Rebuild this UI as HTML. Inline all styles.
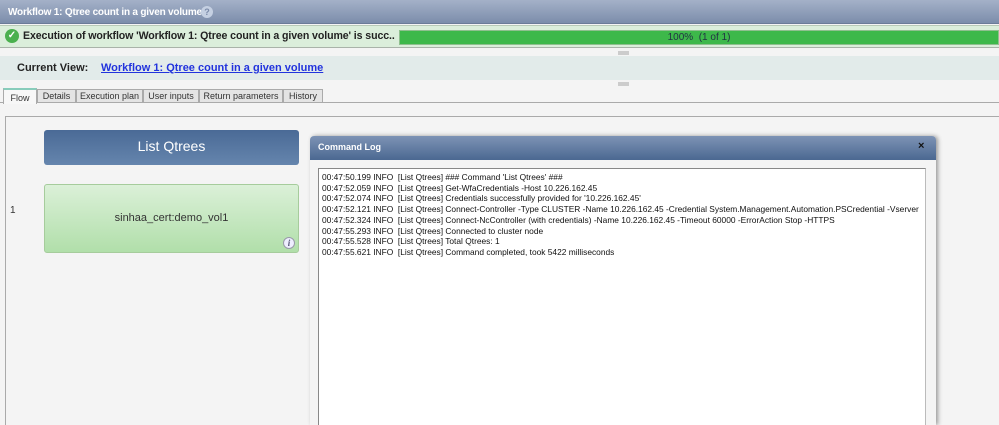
<!DOCTYPE html>
<html><head><style>
*{margin:0;padding:0;box-sizing:border-box}
body{width:999px;height:425px;overflow:hidden;background:#f4f4f4;font-family:"Liberation Sans",sans-serif;position:relative}
.abs{position:absolute}
</style></head><body>
<div class="abs" style="left:0;top:0;width:999px;height:24px;background:linear-gradient(#a4b1c8,#7c8dab);border-bottom:1px solid #6b7b98"></div>
<div class="abs" style="left:8px;top:7px;font-size:10px;font-weight:bold;color:#fff;letter-spacing:-0.2px">Workflow 1: Qtree count in a given volume</div>
<div class="abs" style="left:201px;top:6px;width:12px;height:12px;border-radius:50%;background:#c5d0e2;color:#7a8aa8;font-size:9px;font-weight:bold;text-align:center;line-height:12px">?</div>
<div class="abs" style="left:0;top:25px;width:999px;height:23px;background:#dbeedb;border-top:1px solid #b7c9b7;border-bottom:1px solid #a9b3a9"></div>
<div class="abs" style="left:5px;top:29px;width:14px;height:14px;border-radius:50%;background:#4ab04e;color:#fff;font-size:10px;text-align:center;line-height:14px;font-weight:bold">✓</div>
<div class="abs" style="left:23px;top:30px;font-size:10.6px;font-weight:bold;color:#222;white-space:nowrap;width:372px;overflow:hidden;letter-spacing:-0.1px">Execution of workflow 'Workflow 1: Qtree count in a given volume' is succ...</div>
<div class="abs" style="left:399px;top:30px;width:600px;height:15px;background:#3db84a;border:1px solid #8fbf8f;font-size:10px;color:#234;text-align:center;line-height:13px">100%&nbsp;&nbsp;(1 of 1)</div>
<div class="abs" style="left:618px;top:51px;width:11px;height:4px;background:#ccc"></div>
<div class="abs" style="left:0;top:56px;width:999px;height:24px;background:#e2ebea"></div>
<div class="abs" style="left:17px;top:62px;font-size:11px;font-weight:bold;color:#222">Current View:</div>
<div class="abs" style="left:101px;top:62px;font-size:11px;font-weight:bold;color:#2233dd;text-decoration:underline">Workflow 1: Qtree count in a given volume</div>
<div class="abs" style="left:618px;top:82px;width:11px;height:4px;background:#ccc"></div>
<div class="abs" style="left:0;top:102px;width:999px;height:1px;background:#aaa"></div>
<div class="abs" style="left:3px;top:88px;display:flex;font-size:9px;color:#333">
<div style="width:34px;height:16px;border:1px solid #aaa;border-bottom:none;background:#f7f7f7;text-align:center;line-height:16px;border-top:2px solid #8cb">Flow</div>
<div style="width:39px;height:14px;border:1px solid #aaa;background:#e4e4e4;text-align:center;line-height:13px;margin-top:1px">Details</div>
<div style="width:67px;height:14px;border:1px solid #aaa;background:#e4e4e4;text-align:center;line-height:13px;margin-top:1px">Execution plan</div>
<div style="width:56px;height:14px;border:1px solid #aaa;background:#e4e4e4;text-align:center;line-height:13px;margin-top:1px">User inputs</div>
<div style="width:84px;height:14px;border:1px solid #aaa;background:#e4e4e4;text-align:center;line-height:13px;margin-top:1px">Return parameters</div>
<div style="width:40px;height:14px;border:1px solid #aaa;background:#e4e4e4;text-align:center;line-height:13px;margin-top:1px">History</div>
</div>
<div class="abs" style="left:5px;top:116px;width:994px;height:309px;border-left:1px solid #aaa;border-top:1px solid #aaa;background:#f4f4f4"></div>
<div class="abs" style="left:44px;top:130px;width:255px;height:35px;border-radius:3px;background:linear-gradient(#4a6a96,#6585ad);color:#fff;font-size:14px;text-align:center;line-height:33px">List Qtrees</div>
<div class="abs" style="left:10px;top:205px;font-size:10px;color:#333">1</div>
<div class="abs" style="left:44px;top:184px;width:255px;height:69px;border-radius:3px;border:1px solid #a6cc9c;background:linear-gradient(#dbf0d8,#b1dfaa);color:#333;font-size:11px;text-align:center;line-height:67px">sinhaa_cert:demo_vol1</div>
<div class="abs" style="left:283px;top:237px;width:12px;height:12px;border-radius:50%;border:1px solid #99a;background:#eef;color:#557;font-size:9px;font-style:italic;text-align:center;line-height:10px;font-family:'Liberation Serif',serif;font-weight:bold">i</div>
<div class="abs" style="left:310px;top:136px;width:626px;height:289px;background:#f4f4f4;box-shadow:2px 0 4px #999;border-radius:4px 4px 0 0"></div>
<div class="abs" style="left:310px;top:136px;width:626px;height:24px;border-radius:4px 4px 0 0;background:linear-gradient(#7d93b5,#4b6891)"></div>
<div class="abs" style="left:318px;top:142px;font-size:9px;font-weight:bold;color:#fff">Command Log</div>
<div class="abs" style="left:918px;top:140px;font-size:11px;font-weight:bold;color:#111">×</div>
<div class="abs" style="left:318px;top:168px;width:608px;height:257px;background:#fff;border:1px solid #888;border-right-color:#bbb;border-bottom:none;padding:3px 0 0 3px;font-size:8.4px;line-height:10.7px;color:#111;white-space:pre;overflow:hidden">00:47:50.199 INFO  [List Qtrees] ### Command 'List Qtrees' ###
00:47:52.059 INFO  [List Qtrees] Get-WfaCredentials -Host 10.226.162.45
00:47:52.074 INFO  [List Qtrees] Credentials successfully provided for '10.226.162.45'
00:47:52.121 INFO  [List Qtrees] Connect-Controller -Type CLUSTER -Name 10.226.162.45 -Credential System.Management.Automation.PSCredential -Vserver
00:47:52.324 INFO  [List Qtrees] Connect-NcController (with credentials) -Name 10.226.162.45 -Timeout 60000 -ErrorAction Stop -HTTPS
00:47:55.293 INFO  [List Qtrees] Connected to cluster node
00:47:55.528 INFO  [List Qtrees] Total Qtrees: 1
00:47:55.621 INFO  [List Qtrees] Command completed, took 5422 milliseconds</div>
</body></html>
